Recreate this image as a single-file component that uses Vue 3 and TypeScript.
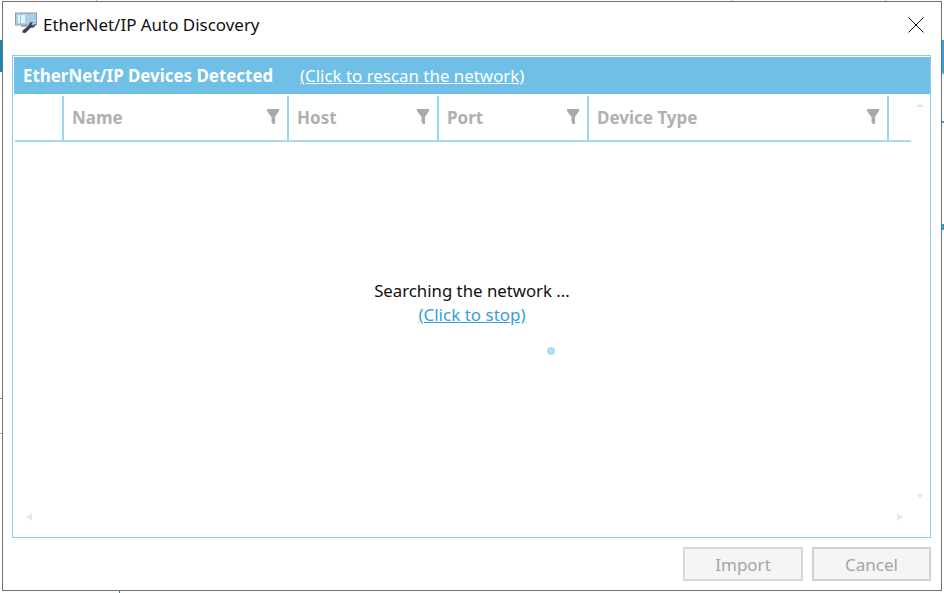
<script setup lang="ts">
interface Column { label: string; width: number }
const columns: Column[] = [
  { label: 'Name', width: 225 },
  { label: 'Host', width: 150 },
  { label: 'Port', width: 150 },
  { label: 'Device Type', width: 300 },
]
</script>

<template>
  <div class="desktop">
    <i class="bg bg-left-blue"></i>
    <i class="bg bg-left-line"></i>
    <i class="bg bg-right-blue"></i>
    <i class="bg bg-right-tick"></i>
    <i class="bg bg-right-tick2"></i>
    <i class="bg bg-top-a"></i>
    <i class="bg bg-top-b"></i>
    <i class="bg bg-top-c"></i>
    <i class="bg bg-bottom"></i>
    <section class="dialog">
      <header class="titlebar">
        <svg class="app-icon" width="24" height="22" viewBox="0 0 24 22">
          <rect x="0.5" y="1" width="21" height="12" fill="#a9cfe8" stroke="#8f9aa3" />
          <rect x="3" y="3" width="7" height="8" fill="#e8f3fa" />
          <path d="M5.500 3v8" stroke="#9ec4de" stroke-width="1" />
          <rect x="6" y="13" width="9" height="2" fill="#a7adb2" />
          <path d="M7 20.500l1-2.500 6-4.500c-.4-2 1.600-4 4.200-3.500l-2 2.300 1.800 1.500 2.400-2c.4 2.600-1.800 4.700-4.400 3.800l-5.500 5.500z" fill="#3c4248" />
        </svg>
        <span class="title">EtherNet/IP Auto Discovery</span>
        <svg class="close" width="16" height="16" viewBox="0 0 16 16">
          <path d="M.5.5l15 15M15.500.5l-15 15" stroke="#111" stroke-width="1" fill="none" />
        </svg>
      </header>

      <main class="panel">
        <div class="banner">
          <strong class="banner-title">EtherNet/IP Devices Detected</strong>
          <a class="banner-link">(Click to rescan the network)</a>
        </div>
        <div class="grid">
          <div class="head">
            <div class="indent"></div>
            <div v-for="c in columns" :key="c.label" class="col" :style="{ width: c.width + 'px' }">
              <span class="col-label">{{ c.label }}</span>
              <svg class="funnel" width="12" height="15" viewBox="0 0 12 15">
                <path d="M0 0h12v2L8 8v7H6L4.500 13V8L0 2z" fill="#a9a9a9" />
              </svg>
            </div>
          </div>
          <div class="status">
            <p class="status-text">Searching the network ...</p>
            <a class="status-link">(Click to stop)</a>
            <i class="spinner"></i>
          </div>
          <i class="arrow up"></i>
          <i class="arrow down"></i>
          <i class="arrow left"></i>
          <i class="arrow right"></i>
        </div>
      </main>

      <footer class="actions">
        <button class="btn import" disabled>Import</button>
        <button class="btn cancel">Cancel</button>
      </footer>
    </section>
  </div>
</template>

<style>
html, body { margin: 0; background: #fff; }
</style>

<style scoped>
.desktop {
  position: relative;
  width: 944px;
  height: 593px;
  overflow: hidden;
  background: #fff;
  padding: 1px 2px 2px 2px;
  box-sizing: border-box;
  font-family: "Noto Sans", "Open Sans", sans-serif;
}
.bg { position: absolute; display: block; }
.bg-left-blue { left: 0; top: 40px; width: 2px; height: 32px; background: #1b87b8; }
.bg-left-line { left: 0; top: 398px; width: 2px; height: 36px; border-top: 1px solid #888; border-bottom: 1px solid #aaa; box-sizing: border-box; }
.bg-right-blue { left: 942px; top: 40px; width: 2px; height: 35px; background: #2aa2dc; border-bottom: 2px solid #bcd; box-sizing: border-box; }
.bg-right-tick { left: 942px; top: 121px; width: 2px; height: 2px; background: #2aa2dc; }
.bg-right-tick2 { left: 942px; top: 224px; width: 2px; height: 6px; background: #2aa2dc; }
.bg-top-a { left: 96px; top: 0; width: 1px; height: 1px; background: #bbb; }
.bg-top-b { left: 731px; top: 0; width: 1px; height: 1px; background: #bbb; }
.bg-top-c { left: 885px; top: 0; width: 1px; height: 1px; background: #bbb; }
.bg-bottom { left: 119px; top: 591px; width: 1px; height: 2px; background: #1b87b8; }

.dialog {
  position: relative;
  width: 940px;
  height: 590px;
  box-sizing: border-box;
  border: 1px solid #707070;
  background: #fff;
  display: flex;
  flex-direction: column;
}
.titlebar {
  height: 53px;
  flex: none;
  display: flex;
  align-items: center;
  padding: 0 17px 8px 12px;
  box-sizing: border-box;
}
.app-icon { flex: none; margin-right: 4px; margin-top: -4px; }
.title {
  font-size: 16.950px;
  color: #101010;
  flex: 1;
  white-space: nowrap;
}
.close { flex: none; }

.panel {
  margin: 0 10px 0 9px;
  height: 483px;
  flex: none;
  box-sizing: border-box;
  border: 1px solid #8accea;
  display: flex;
  flex-direction: column;
  position: relative;
  padding: 1px 0 0 1px;
}
.banner {
  height: 37px;
  flex: none;
  background: #6fbfe7;
  display: flex;
  align-items: center;
  padding-left: 9px;
  color: #fff;
  font-size: 16.900px;
}
.banner-title { font-weight: 700; width: 277px; white-space: nowrap; }
.banner-link { text-decoration: underline; white-space: nowrap; }
.grid { position: relative; flex: 1; }
.head {
  display: flex;
  height: 48px;
  width: 896px;
  margin-left: 1px;
  box-sizing: border-box;
  border-bottom: 2px solid #a5dcf2;
  padding-top: 2px;
}
.indent { width: 47px; flex: none; border-right: 2px solid #9fd4ee; }
.col {
  flex: none;
  box-sizing: border-box;
  border-right: 2px solid #9fd4ee;
  display: flex;
  align-items: center;
  justify-content: space-between;
  padding: 0 8px 0 8px;
}
.col-label {
  font-size: 17px;
  font-weight: 700;
  color: #b0b0b0;
  white-space: nowrap;
  margin-top: -2px;
}
.funnel { margin-top: -4px; }
.status {
  position: absolute;
  left: 0;
  right: 0;
  top: 185px;
  text-align: center;
  font-size: 16.800px;
}
.status-text { margin: 0; color: #111; line-height: 24px; }
.status-link { color: #35a0dc; text-decoration: underline; display: block; line-height: 24px; font-size: 17px; }
.spinner {
  position: absolute;
  left: 533px;
  top: 68px;
  width: 8px;
  height: 8px;
  border-radius: 50%;
  background: #afdcf4;
}
.arrow { position: absolute; width: 0; height: 0; border-style: solid; border-color: transparent; }
.up { right: 6px; top: 9px; border-width: 0 4px 4px; border-bottom-color: #e9e9e9; }
.down { right: 6px; bottom: 39px; border-width: 4px 4px 0; border-top-color: #e9e9e9; }
.left { left: 12px; bottom: 16px; border-width: 4px 6px 4px 0; border-right-color: #e9e9e9; }
.right { right: 27px; bottom: 16px; border-width: 4px 0 4px 6px; border-left-color: #e9e9e9; }

.actions {
  flex: 1;
  display: flex;
  justify-content: flex-end;
  gap: 9px;
  padding: 9px 10px 0 0;
}
.btn {
  height: 34px;
  box-sizing: border-box;
  border: 2px solid #cfd3d5;
  background: #f5f5f5;
  color: #a5a5a5;
  font: inherit;
  font-size: 17px;
  padding: 0;
}
.import { width: 120px; border-color: #d6d9da; }
.cancel { width: 119px; }
</style>
